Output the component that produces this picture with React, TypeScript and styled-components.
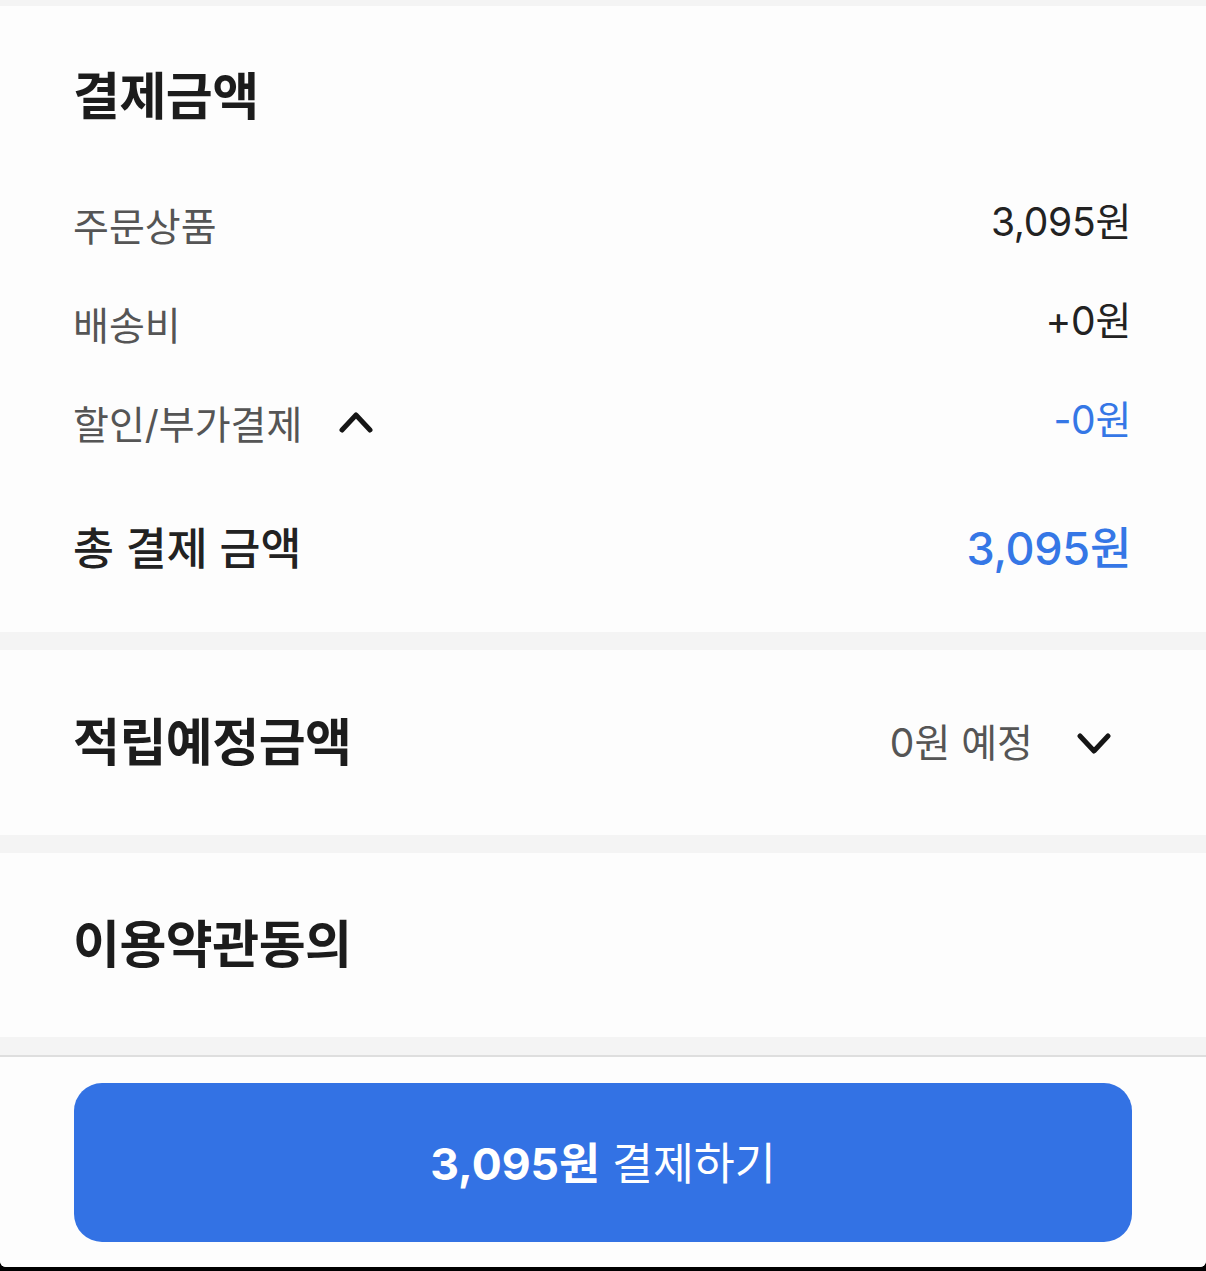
import React from "react";
import styled, { createGlobalStyle } from "styled-components";

const Global = createGlobalStyle`
  html, body { margin: 0; padding: 0; background: #000; }
  body { font-family: Inter, "Noto Sans CJK KR", "Noto Sans", sans-serif; -webkit-font-smoothing: antialiased; }
  * { box-sizing: border-box; }
`;

const Page = styled.div`
  width: 1206px;
  height: 1271px;
  display: flex;
  flex-direction: column;
  background: #000;
  overflow: hidden;
`;

const Screen = styled.div`
  flex: 0 0 1267px;
  display: flex;
  flex-direction: column;
  background: #f4f4f4;
  padding-top: 6px;
  gap: 18px;
  border-radius: 0 0 6px 6px;
  overflow: hidden;
`;

const Section = styled.section<{ $h?: number }>`
  background: #fdfdfd;
  padding: 0 75px 0 73px;
  flex: 0 0 auto;
  ${(p) => (p.$h ? `height: ${p.$h}px;` : "")}
`;

const PaySection = styled(Section)`
  height: 626px;
  padding-top: 61px;
  display: flex;
  flex-direction: column;
`;

const Title = styled.h2`
  margin: 0;
  font-size: 51px;
  line-height: 60px;
  font-weight: 700;
  color: #1c1c1c;
  letter-spacing: -0.5px;
`;

const Rows = styled.div`
  margin-top: 47px;
  display: flex;
  flex-direction: column;
`;

const Row = styled.div<{ $h: number }>`
  height: ${(p) => p.$h}px;
  display: flex;
  align-items: center;
  justify-content: space-between;
`;

const Label = styled.span`
  display: flex;
  align-items: center;
  gap: 37px;
  font-size: 39px;
  color: #555;
  font-weight: 400;
`;

const Value = styled.span<{ $blue?: boolean }>`
  font-size: 39px;
  color: ${(p) => (p.$blue ? "#3577e6" : "#222")};
  font-weight: 400;
  letter-spacing: -0.3px;
  transform: translateY(-5px);
`;

const TotalRow = styled(Row)`
  margin-top: 24px;
`;

const TotalLabel = styled.span`
  font-size: 44.5px;
  font-weight: 500;
  color: #222;
`;

const TotalValue = styled.span`
  font-size: 45px;
  font-weight: 500;
  color: #3577e6;
  letter-spacing: -0.3px;
`;

const HeaderSection = styled(Section)`
  display: flex;
  align-items: center;
  justify-content: space-between;
`;

const Right = styled.div`
  display: flex;
  align-items: center;
  gap: 44px;
  padding-right: 20px;
`;

const Sub = styled.span`
  font-size: 39px;
  color: #555;
  transform: translateY(-3px);
`;

const Bottom = styled.div`
  flex: 1;
  background: #fdfdfd;
  border-top: 2px solid #dedede;
  padding: 26px 74px 0 74px;
  margin-top: -18px;
`;

const Spacer = styled.div`
  height: 0;
`;

const PayButton = styled.button`
  width: 100%;
  height: 159px;
  border: none;
  border-radius: 28px;
  background: #3372e4;
  color: #fff;
  font-family: inherit;
  font-size: 44.5px;
  display: flex;
  align-items: center;
  justify-content: center;
  gap: 12px;
  padding: 0 0 5px 0;
  cursor: pointer;
`;

const Strong = styled.span`
  font-weight: 700;
`;

const Light = styled.span`
  font-weight: 400;
`;

const Chevron = ({ up }: { up?: boolean }) => (
  <svg width="34" height="22" viewBox="0 0 34 22" fill="none">
    <path
      d={up ? "M3 19 L17 4 L31 19" : "M3 4 L17 19 L31 4"}
      stroke="#151515"
      strokeWidth="5"
      strokeLinecap="round"
      strokeLinejoin="round"
    />
  </svg>
);

export default function App() {
  return (
    <Page>
      <Global />
      <Screen>
        <PaySection>
          <Title>결제금액</Title>
          <Rows>
            <Row $h={99}>
              <Label>주문상품</Label>
              <Value>3,095원</Value>
            </Row>
            <Row $h={99}>
              <Label>배송비</Label>
              <Value>+0원</Value>
            </Row>
            <Row $h={99}>
              <Label>
                할인/부가결제
                <Chevron up />
              </Label>
              <Value $blue>-0원</Value>
            </Row>
          </Rows>
          <TotalRow $h={100}>
            <TotalLabel>총 결제 금액</TotalLabel>
            <TotalValue>3,095원</TotalValue>
          </TotalRow>
        </PaySection>
        <HeaderSection $h={185}>
          <Title>적립예정금액</Title>
          <Right>
            <Sub>0원 예정</Sub>
            <Chevron />
          </Right>
        </HeaderSection>
        <HeaderSection $h={184}>
          <Title>이용약관동의</Title>
        </HeaderSection>
        <Spacer />
        <Bottom>
          <PayButton>
            <Strong>3,095원</Strong>
            <Light>결제하기</Light>
          </PayButton>
        </Bottom>
      </Screen>
    </Page>
  );
}
